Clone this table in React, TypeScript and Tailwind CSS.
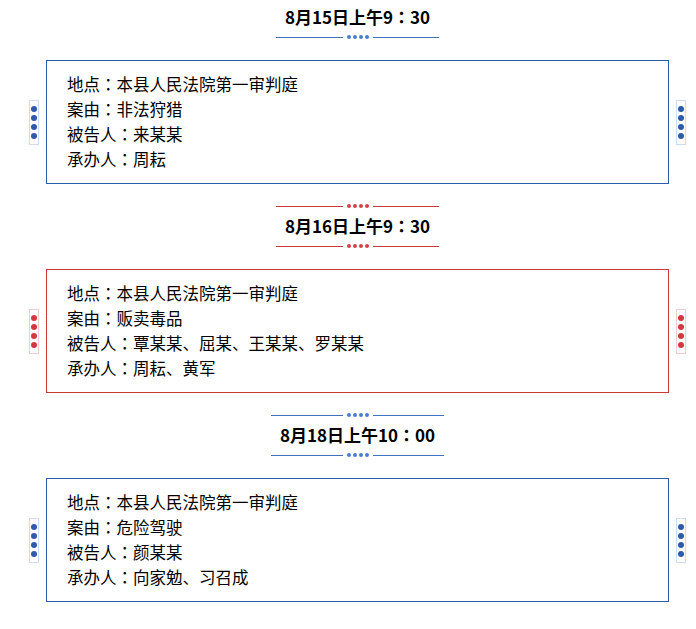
import React from 'react';

type Tone = 'blue' | 'red';

const sessions: {
  time: [string, string];
  tone: Tone;
  top: boolean;
  rows: [string, string][];
}[] = [
  {
    time: ['8月15日上午9', '30'],
    tone: 'blue',
    top: false,
    rows: [
      ['地点', '本县人民法院第一审判庭'],
      ['案由', '非法狩猎'],
      ['被告人', '来某某'],
      ['承办人', '周耘'],
    ],
  },
  {
    time: ['8月16日上午9', '30'],
    tone: 'red',
    top: true,
    rows: [
      ['地点', '本县人民法院第一审判庭'],
      ['案由', '贩卖毒品'],
      ['被告人', '覃某某、屈某、王某某、罗某某'],
      ['承办人', '周耘、黄军'],
    ],
  },
  {
    time: ['8月18日上午10', '00'],
    tone: 'blue',
    top: true,
    rows: [
      ['地点', '本县人民法院第一审判庭'],
      ['案由', '危险驾驶'],
      ['被告人', '颜某某'],
      ['承办人', '向家勉、习召成'],
    ],
  },
];

// full-width colon centred in its box, as in the original rendering
function Colon() {
  return <span style={{ fontFamily: '"Noto Sans CJK TC", sans-serif' }}>：</span>;
}

function Divider({ tone }: { tone: Tone }) {
  const line = tone === 'red' ? 'bg-[#c8383a]' : 'bg-[#3d72c2]';
  const dot = tone === 'red' ? 'bg-[#d04448]' : 'bg-[#4a7fcc]';
  return (
    <div className="flex h-2 w-full items-center">
      <div className={`h-px flex-1 ${line}`} />
      <div className="mx-[4px] flex gap-[2px]">
        {[0, 1, 2, 3].map((i) => (
          <span key={i} className={`h-[4px] w-[4px] rounded-full ${dot}`} />
        ))}
      </div>
      <div className={`h-px flex-1 ${line}`} />
    </div>
  );
}

function SideBar({ tone }: { tone: Tone }) {
  return (
    <div
      className={`flex h-[45px] w-[10px] flex-col items-center justify-center gap-[3px] border ${
        tone === 'red' ? 'border-[#f0cdcd]' : 'border-[#cfdbee]'
      }`}
    >
      {[0, 1, 2, 3].map((i) => (
        <span
          key={i}
          className={`h-[6px] w-[6px] rounded-full ${tone === 'red' ? 'bg-[#d03a3e]' : 'bg-[#2a5ca8]'}`}
        />
      ))}
    </div>
  );
}

export default function App() {
  return (
    <div
      className="min-h-[629px] bg-white pt-px text-black"
      style={{ fontFamily: '"Microsoft YaHei", "Noto Sans CJK SC", "Noto Sans", sans-serif' }}
    >
      {sessions.map((s, idx) => (
        <div key={idx} className={idx === 0 ? '' : 'mt-[18px]'}>
          <div className="ml-[46px] flex w-[623px] justify-center">
            <div className="flex w-fit flex-col items-stretch">
              {s.top && <Divider tone={s.tone} />}
              <div className="flex h-8 items-center justify-center px-[9px] text-[17px] font-bold">
                {s.time[0]}
                <Colon />
                {s.time[1]}
              </div>
              <Divider tone={s.tone} />
            </div>
          </div>
          <div className="mt-[19px] flex items-center pl-[29px]">
            <SideBar tone={s.tone} />
            <div
              className={`ml-[7px] w-[623px] border px-[20px] py-[11px] text-[16.5px] leading-[25px] ${
                s.tone === 'red' ? 'border-[#c8383a]' : 'border-[#2a5ca8]'
              }`}
            >
              {s.rows.map(([k, v]) => (
                <div key={k}>
                  {k}
                  <Colon />
                  {v}
                </div>
              ))}
            </div>
            <div className="ml-[7px]">
              <SideBar tone={s.tone} />
            </div>
          </div>
        </div>
      ))}
    </div>
  );
}
